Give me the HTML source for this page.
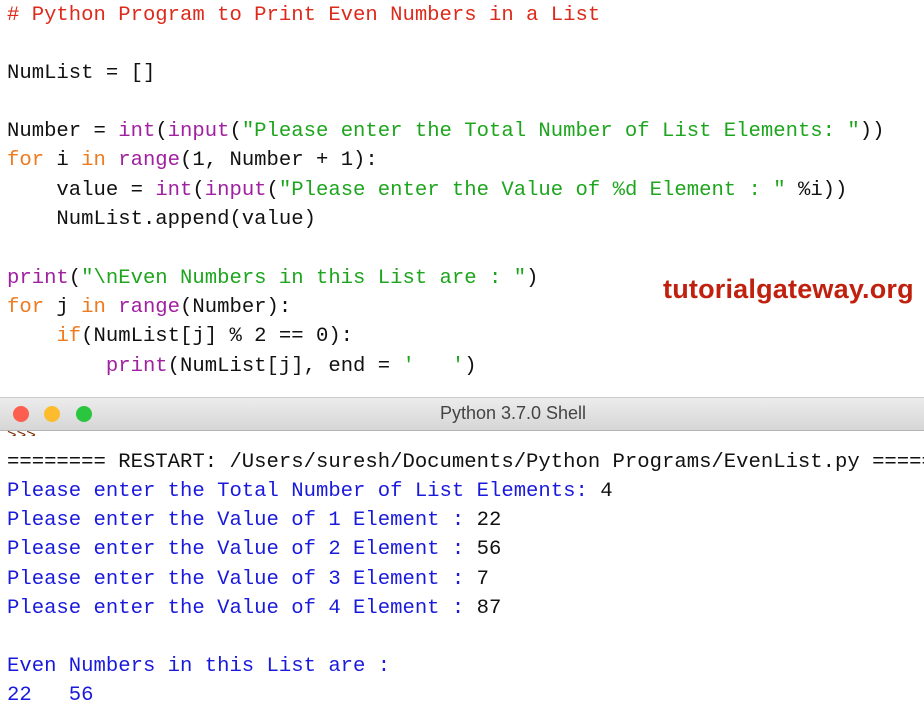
<!DOCTYPE html>
<html><head><meta charset="utf-8"><style>
body{margin:0;width:924px;height:710px;overflow:hidden;background:#fff;position:relative;font-family:"Liberation Mono",monospace;font-size:20.6px;}
.l{position:absolute;left:7px;white-space:pre;line-height:24px;color:#111;max-width:917px;overflow:hidden;}
.r{color:#dd2a1b}.o{color:#f07a1e}.p{color:#a020a0}.g{color:#1ea51e}.b{color:#1a1adc}
#bar{position:absolute;left:0;top:397px;width:924px;height:32px;background:linear-gradient(#ececec,#d6d6d6);border-top:1px solid #ccc;border-bottom:1px solid #b5b5b5;overflow:hidden;}
.dot{position:absolute;top:8px;width:16px;height:16px;border-radius:50%;}
#title{position:absolute;left:0;width:1026px;top:5px;text-align:center;font-family:"Liberation Sans",sans-serif;font-size:18px;color:#444;}
#logo{position:absolute;left:663px;top:274px;font-family:"Liberation Sans",sans-serif;font-weight:bold;font-size:27px;color:#c0200e;letter-spacing:0.2px;white-space:nowrap;}
</style></head><body>
<div class="l r" style="top:4px"># Python Program to Print Even Numbers in a List</div>
<div class="l" style="top:62px">NumList = []</div>
<div class="l" style="top:120px">Number = <span class="p">int</span>(<span class="p">input</span>(<span class="g">"Please enter the Total Number of List Elements: "</span>))</div>
<div class="l" style="top:149px"><span class="o">for</span> i <span class="o">in</span> <span class="p">range</span>(1, Number + 1):</div>
<div class="l" style="top:179px">    value = <span class="p">int</span>(<span class="p">input</span>(<span class="g">"Please enter the Value of %d Element : "</span> %i))</div>
<div class="l" style="top:208px">    NumList.append(value)</div>
<div class="l" style="top:267px"><span class="p">print</span>(<span class="g">"\nEven Numbers in this List are : "</span>)</div>
<div class="l" style="top:296px"><span class="o">for</span> j <span class="o">in</span> <span class="p">range</span>(Number):</div>
<div class="l" style="top:325px">    <span class="o">if</span>(NumList[j] % 2 == 0):</div>
<div class="l" style="top:355px">        <span class="p">print</span>(NumList[j], end = <span class="g">'   '</span>)</div>
<div id="logo">tutorialgateway.org</div>
<div id="bar"><div class="dot" style="left:13px;background:#fc5f4f"></div><div class="dot" style="left:44px;background:#fdbc2e"></div><div class="dot" style="left:76px;background:#2bc640"></div><div id="title">Python 3.7.0 Shell</div></div>
<div class="l" style="top:424px;color:#7a2a00;font-size:16px;height:12px;overflow:hidden">&gt;&gt;&gt;</div>
<div class="l" style="top:451px">======== RESTART: /Users/suresh/Documents/Python Programs/EvenList.py ========</div>
<div class="l" style="top:480px"><span class="b">Please enter the Total Number of List Elements: </span>4</div>
<div class="l" style="top:509px"><span class="b">Please enter the Value of 1 Element : </span>22</div>
<div class="l" style="top:538px"><span class="b">Please enter the Value of 2 Element : </span>56</div>
<div class="l" style="top:568px"><span class="b">Please enter the Value of 3 Element : </span>7</div>
<div class="l" style="top:597px"><span class="b">Please enter the Value of 4 Element : </span>87</div>
<div class="l b" style="top:655px">Even Numbers in this List are : </div>
<div class="l b" style="top:684px">22   56</div>
</body></html>
